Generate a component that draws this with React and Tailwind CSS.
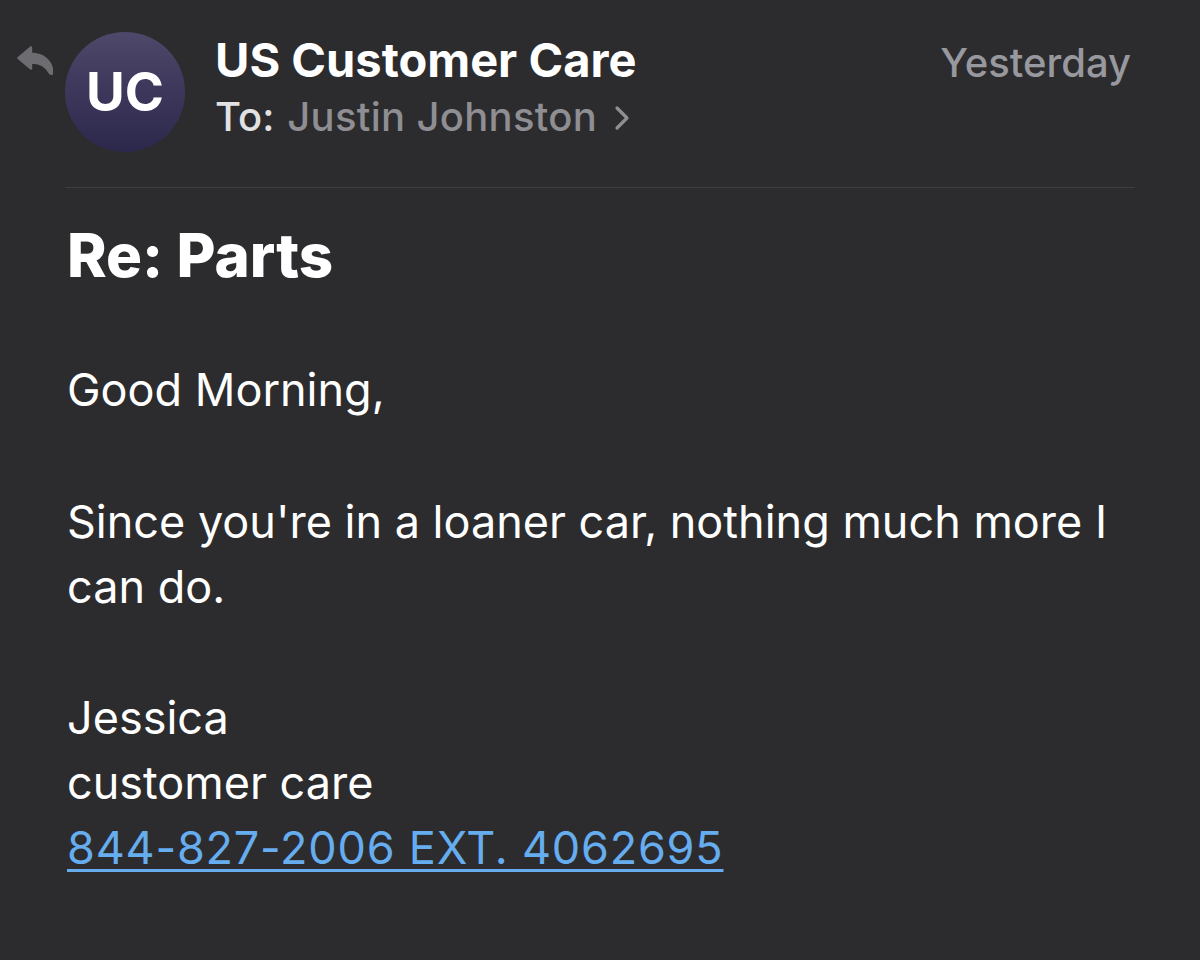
import React from "react";

const ReplyIcon = () => (
  <svg width="36" height="30" viewBox="0 0 36 30" fill="#6d6d71">
    <path
      d="M14 1.5 L1.5 12 L14 22.5 L14 16.5 C22 16.5 28.5 18.5 32.5 26.5 C33.6 28.6 35.6 28.2 35.4 25.8 C34.4 15 26.5 8 14 7.8 Z"
      stroke="#6d6d71"
      strokeWidth="2.4"
      strokeLinejoin="round"
    />
  </svg>
);

const Chevron = () => (
  <svg width="16" height="26" viewBox="0 0 16 26" fill="none">
    <path d="M3 3 L13 13 L3 23" stroke="#8e8e93" strokeWidth="3.2" strokeLinecap="round" strokeLinejoin="round" />
  </svg>
);

export default function App() {
  return (
    <div
      className="w-[1200px] h-[960px] bg-[#2c2c2e] text-white overflow-hidden"
      style={{ fontFamily: "Inter, 'Noto Sans', sans-serif" }}
    >
      {/* header */}
      <div className="flex items-start pt-[32px] pl-[17px] pr-[69px]">
        <div className="mt-[14px]">
          <ReplyIcon />
        </div>
        <div className="ml-[12px] w-[120px] h-[120px] rounded-full bg-linear-to-b from-[#4e486a] to-[#2c284c] flex items-center justify-center shrink-0">
          <span className="text-[53px] font-bold leading-none">UC</span>
        </div>
        <div className="ml-[30px] flex-1">
          <div className="mt-[1px] text-[47px] leading-[54px] font-bold whitespace-nowrap">
            US Customer Care
          </div>
          <div className="mt-[7px] text-[40px] leading-[46px] font-medium flex items-center whitespace-nowrap">
            <span className="text-[#e2e2e4]">To:</span>
            <span className="ml-[13px] text-[#8e8e93] tracking-[0.3px]">Justin Johnston</span>
            <span className="ml-[17px] mt-[2px]">
              <Chevron />
            </span>
          </div>
        </div>
        <div className="mt-[4px] text-[40px] leading-[54px] font-medium text-[#98989f]">Yesterday</div>
      </div>

      <div className="mx-[65px] mt-[35px] h-px bg-[#3e3e41]" />

      {/* message */}
      <div className="pl-[67px] pr-[65px]">
        <div className="mt-[34px] text-[60px] leading-[66px] font-extrabold">Re: Parts</div>
        <div className="text-[45px] leading-[65px] whitespace-nowrap">
          <div className="mt-[69px]">Good Morning,</div>
          <div className="mt-[67px]">
            Since you're in a loaner car, nothing much more I
            <br />
            can do.
          </div>
          <div className="mt-[66px]">
            Jessica
            <br />
            customer care
            <br />
            <a href="#" className="text-[#66adf0] tracking-[0.8px] underline decoration-[3px] underline-offset-[5px]">
              844-827-2006 EXT. 4062695
            </a>
          </div>
        </div>
      </div>
    </div>
  );
}
